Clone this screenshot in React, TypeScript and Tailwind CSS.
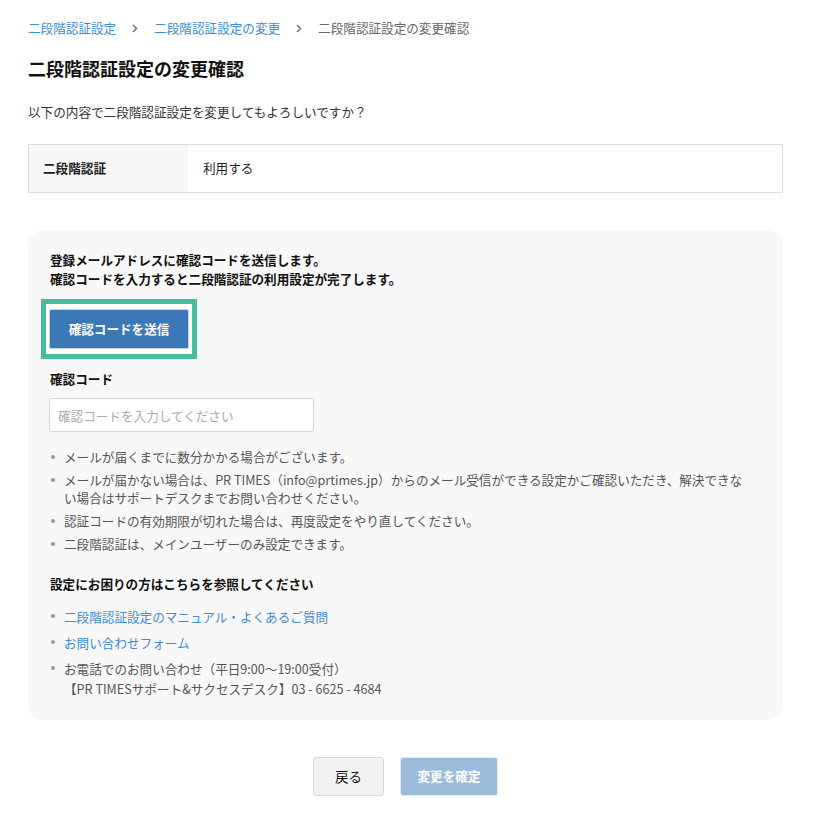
const FONT = "font-['Meiryo','Noto_Sans_CJK_JP','Noto_Sans',sans-serif]";

function Chevron() {
  return (
    <svg aria-hidden="true" className="mx-[16px] h-[9px] w-[6px]" viewBox="0 0 6 9" fill="none">
      <path d="M1 1l3.5 3.5L1 8" stroke="#777" strokeWidth="1.6" />
    </svg>
  );
}

function Dot() {
  return <span aria-hidden="true" className="mt-[7px] ml-[1px] h-[4px] w-[4px] shrink-0 rounded-full bg-[#999]" />;
}

const notes = [
  "メールが届くまでに数分かかる場合がございます。",
  "メールが届かない場合は、PR TIMES（info@prtimes.jp）からのメール受信ができる設定かご確認いただき、解決できない場合はサポートデスクまでお問い合わせください。",
  "認証コードの有効期限が切れた場合は、再度設定をやり直してください。",
  "二段階認証は、メインユーザーのみ設定できます。",
];

export default function App() {
  return (
    <div className={`${FONT} min-h-[826px] bg-white pl-[28px] pr-[33px] pt-[19px] pb-[30px] text-[12.6px] text-[#333]`}>
      <nav className="flex items-center leading-[18px]">
        <a className="text-[#3d8dd5]">二段階認証設定</a>
        <Chevron />
        <a className="text-[#3d8dd5]">二段階認証設定の変更</a>
        <Chevron />
        <span className="text-[#666]">二段階認証設定の変更確認</span>
      </nav>

      <h1 className="mt-[18px] text-[18px] font-bold leading-[26px] text-[#111]">二段階認証設定の変更確認</h1>

      <p className="mt-[22px] leading-[18px] text-[#333]">以下の内容で二段階認証設定を変更してもよろしいですか？</p>

      <div className="mt-[23px] flex h-[49px] border border-[#dcdcdc]">
        <div className="flex w-[159px] items-center bg-[#f8f8f8] pl-[14px] font-bold text-[#222]">二段階認証</div>
        <div className="flex items-center pl-[15px] text-[#222]">利用する</div>
      </div>

      <section className="mt-[37px] rounded-[16px] bg-[#f8f8f8] px-[22px] pt-[20px] pb-[21px]">
        <p className="font-bold leading-[19px] text-[#111]">
          登録メールアドレスに確認コードを送信します。
          <br />
          確認コードを入力すると二段階認証の利用設定が完了します。
        </p>

        <div className="mt-[11px] ml-[-9px] inline-block border-[5px] border-[#44be9e] bg-white px-[3px] py-[5px]">
          <button className="block h-[40px] w-[140px] rounded-[2px] border border-[#c9d3de] bg-[#3a78b8] font-bold text-white">
            確認コードを送信
          </button>
        </div>

        <p className="mt-[11px] font-bold leading-[18px] text-[#111]">確認コード</p>
        <input
          className="mt-[10px] ml-[-1px] block h-[34px] w-[265px] rounded-[3px] border border-[#d6d6d6] bg-white px-[8px] text-[12.6px] placeholder:text-[#aaa]"
          placeholder="確認コードを入力してください"
        />

        <ul className="mt-[16px] mr-[10px] flex flex-col gap-[5px] text-[#555]">
          {notes.map((n) => (
            <li key={n} className="flex gap-[9px] leading-[18px]">
              <Dot />
              <span>{n}</span>
            </li>
          ))}
        </ul>

        <h2 className="mt-[21px] font-bold leading-[19px] text-[#111]">設定にお困りの方はこちらを参照してください</h2>

        <ul className="mt-[14px] flex flex-col gap-[6px] leading-[20px]">
          <li className="flex gap-[9px]">
            <Dot />
            <a className="text-[#3d8dd5]">二段階認証設定のマニュアル・よくあるご質問</a>
          </li>
          <li className="flex gap-[9px]">
            <Dot />
            <a className="text-[#3d8dd5]">お問い合わせフォーム</a>
          </li>
          <li className="flex gap-[9px] text-[#555]">
            <Dot />
            <span>
              お電話でのお問い合わせ（平日9:00〜19:00受付）
              <br />
              【PR TIMESサポート&amp;サクセスデスク】03 - 6625 - 4684
            </span>
          </li>
        </ul>
      </section>

      <div className="mt-[37px] flex justify-center gap-[16px]">
        <button className="h-[39px] w-[71px] rounded-[3px] border border-[#d9d9d9] bg-[#f2f2f2] text-[13.5px] text-[#111]">戻る</button>
        <button className="h-[39px] w-[98px] rounded-[3px] border border-[#e4e9ef] bg-[#9bbcdb] font-bold text-white">変更を確定</button>
      </div>
    </div>
  );
}
